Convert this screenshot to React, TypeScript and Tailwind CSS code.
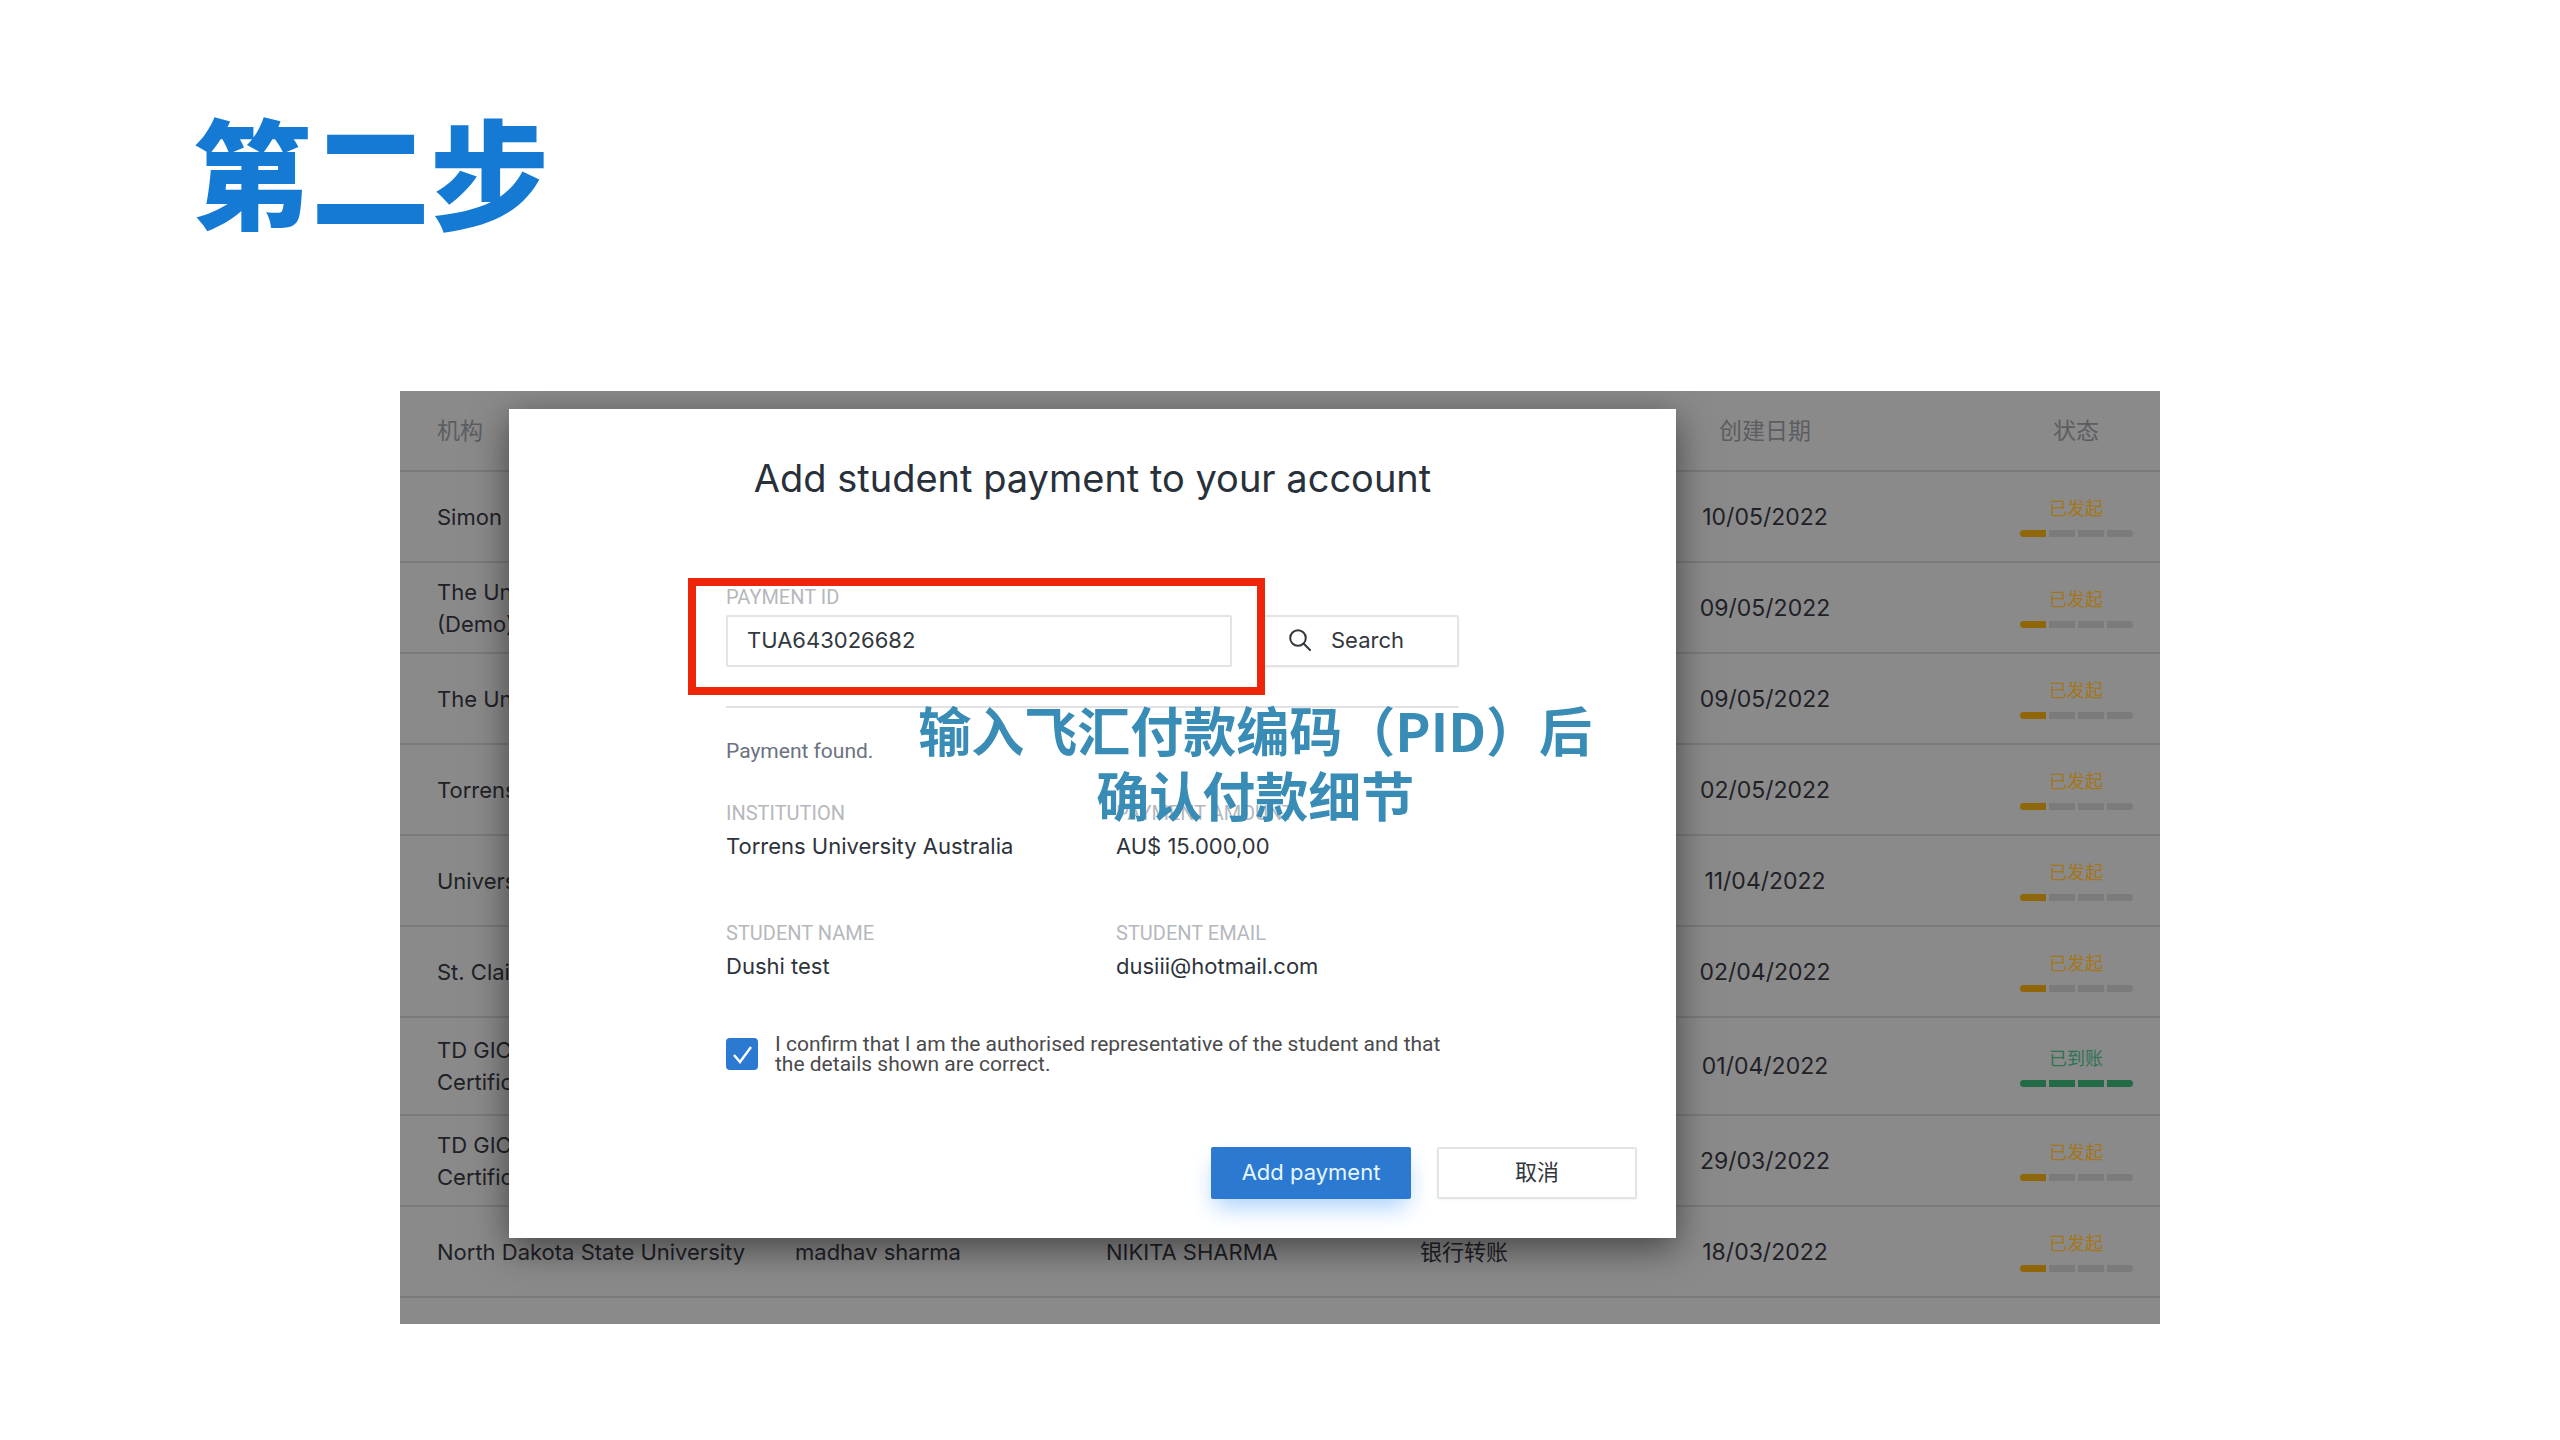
import type { ReactNode } from 'react'

interface Row {
  institution: string[]
  student?: string
  payer?: string
  method?: string
  date: string
  received?: boolean
}

const rows: Row[] = [
  { institution: ['Simon Fraser'], date: '10/05/2022' },
  { institution: ['The University', '(Demo)'], date: '09/05/2022' },
  { institution: ['The University'], date: '09/05/2022' },
  { institution: ['Torrens University'], date: '02/05/2022' },
  { institution: ['University'], date: '11/04/2022' },
  { institution: ['St. Clair College'], date: '02/04/2022' },
  { institution: ['TD GIC', 'Certificate'], date: '01/04/2022', received: true },
  { institution: ['TD GIC', 'Certificate'], date: '29/03/2022' },
  {
    institution: ['North Dakota State University'],
    student: 'madhav sharma',
    payer: 'NIKITA SHARMA',
    method: '银行转账',
    date: '18/03/2022',
  },
]

function Status({ received = false }: { received?: boolean }) {
  const done = received ? 4 : 1
  return (
    <div className="flex flex-col items-center gap-2">
      <span className={`text-[18px] leading-[26px] ${received ? 'text-[#2f7353]' : 'text-[#a3761c]'}`}>
        {received ? '已到账' : '已发起'}
      </span>
      <div className="flex gap-[3px] overflow-hidden rounded-sm">
        {[0, 1, 2, 3].map((i) => (
          <span
            key={i}
            className={`h-[7px] w-[26px] ${i >= done ? 'bg-[#7b7b7b]' : received ? 'bg-[#236b47]' : 'bg-[#8f6709]'}`}
          />
        ))}
      </div>
    </div>
  )
}

function PaymentsTable() {
  return (
    <table className="w-full table-fixed border-collapse text-[22px] leading-8 text-[#1f2127]">
      <colgroup>
        <col className="w-[395px]" />
        <col className="w-[311px]" />
        <col className="w-[314px]" />
        <col className="w-[190px]" />
        <col />
        <col className="w-[168px]" />
      </colgroup>
      <thead>
        <tr className="h-20 border-b-2 border-[#7a7a7a] text-[23px] text-[#5c5d61]">
          <th className="pl-[37px] text-left font-normal">机构</th>
          <th />
          <th />
          <th />
          <th className="pr-[72px] font-normal">创建日期</th>
          <th className="font-normal">状态</th>
        </tr>
      </thead>
      <tbody>
        {rows.map((row, i) => (
          <tr key={i} className={`border-b-2 border-[#7a7a7a] ${row.received ? 'h-[98px]' : 'h-[91px]'}`}>
            <td className="pl-[37px] whitespace-nowrap">
              {row.institution.map((line) => (
                <div key={line}>{line}</div>
              ))}
            </td>
            <td>{row.student}</td>
            <td>{row.payer}</td>
            <td>{row.method}</td>
            <td className="pr-[72px] text-center text-[23px]">{row.date}</td>
            <td>
              <Status received={row.received} />
            </td>
          </tr>
        ))}
      </tbody>
    </table>
  )
}

function Detail({ label, children }: { label: string; children: ReactNode }) {
  return (
    <div>
      <dt className="font-[Roboto,sans-serif] text-[20px] leading-8 text-[#b5b8bd]">{label}</dt>
      <dd className="text-[22px] leading-[34px] text-[#2e333b]">{children}</dd>
    </div>
  )
}

function PaymentDialog() {
  return (
    <div
      role="dialog"
      aria-labelledby="dialog-title"
      className="flex h-[829px] flex-col bg-white shadow-[0_10px_34px_0_rgba(0,0,0,0.5)]"
    >
      <h2 id="dialog-title" className="pt-[43px] text-center text-[38px] leading-[52px] text-[#28303a]">
        Add student payment to your account
      </h2>

      <div className="px-[217px] pt-[79px]">
        <label htmlFor="payment-id" className="block font-[Roboto,sans-serif] text-[20px] leading-7 text-[#b5b8bd]">
          PAYMENT ID
        </label>
        {/* Field row with the red marker around the field */}
        <div className="relative flex gap-[25px] pt-1">
          <input
            id="payment-id"
            defaultValue="TUA643026682"
            className="h-[52px] min-w-0 flex-1 rounded-xs border-2 border-[#e4e4e6] px-[19px] pb-0.5 text-[22px] text-[#33373e]"
          />
          <button className="flex h-[52px] w-[202px] items-center gap-5 rounded-xs border-2 border-[#e4e4e6] pb-0.5 pl-[30px] text-[22px] text-[#33373e] shadow-xs">
            <svg viewBox="0 0 22 22" className="size-[22px]" fill="none" stroke="currentColor" strokeWidth="2" strokeLinecap="round">
              <circle cx="9" cy="9" r="7.8" />
              <path d="M14.8 14.8L21 21" />
            </svg>
            Search
          </button>
          <div className="pointer-events-none absolute -top-[33px] right-[194px] -bottom-7 -left-[38px] border-8 border-[#ee2509]" />
        </div>

        <hr className="mt-[39px] border-t-2 border-[#e2e2e4]" />
        <p className="pt-[27px] font-[Roboto,sans-serif] text-[21px] leading-8 text-[#6a7280]">Payment found.</p>

        <dl className="grid grid-cols-[390px_1fr] gap-y-[54px] pt-[30px]">
          <Detail label="INSTITUTION">Torrens University Australia</Detail>
          <Detail label="PAYMENT AMOUNT">AU$ 15.000,00</Detail>
          <Detail label="STUDENT NAME">Dushi test</Detail>
          <Detail label="STUDENT EMAIL">dusiii@hotmail.com</Detail>
        </dl>

        <div className="flex items-center gap-[17px] pt-[51px]">
          <span className="relative flex size-8 shrink-0">
            <input
              id="confirm"
              type="checkbox"
              defaultChecked
              className="size-8 appearance-none rounded-sm bg-[#2b79d0]"
            />
            <svg viewBox="0 0 32 32" className="pointer-events-none absolute inset-0" fill="none" stroke="white" strokeWidth="2.4">
              <path d="M8 17l6 7L25 9" />
            </svg>
          </span>
          <label htmlFor="confirm" className="font-[Roboto,sans-serif] text-[21px] leading-5 whitespace-nowrap text-[#4a4a4c]">
            I confirm that I am the authorised representative of the student and that
            <br />
            the details shown are correct.
          </label>
        </div>
      </div>

      <div className="mt-auto flex justify-end gap-[26px] pr-[39px] pb-[39px] text-[22px]">
        <button className="h-[52px] w-[200px] rounded-xs bg-[#2b79d0] pb-0.5 text-[#e6f6ff] shadow-[0_12px_24px_-4px_#a9d0fa]">
          Add payment
        </button>
        <button className="h-[52px] w-[200px] rounded-xs border-2 border-[#e4e4e6] pb-0.5 text-[#33373e] shadow-xs">
          取消
        </button>
      </div>
    </div>
  )
}

export default function App() {
  return (
    <main className="min-h-screen bg-white pt-[83px] font-[Inter,'Noto_Sans_CJK_SC',sans-serif]">
      <h1 className="pl-[192px] font-['Noto_Sans_CJK_SC',sans-serif] text-[119px] leading-[172px] font-black text-[#157ad4]">
        第二步
      </h1>

      <section className="relative mx-auto mt-[136px] w-11/16 overflow-hidden bg-[#8a8a8a] pb-[26px]">
        <PaymentsTable />
        <div className="absolute inset-0 pt-[18px] pr-[484px] pl-[109px]">
          <PaymentDialog />
        </div>
        <p className="pointer-events-none absolute top-[306px] right-[568px] text-center font-['Noto_Sans_CJK_SC',sans-serif] text-[53px] leading-[65px] font-bold text-[#398cb5]">
          输入飞汇付款编码（PID）后
          <br />
          确认付款细节
        </p>
      </section>
    </main>
  )
}
